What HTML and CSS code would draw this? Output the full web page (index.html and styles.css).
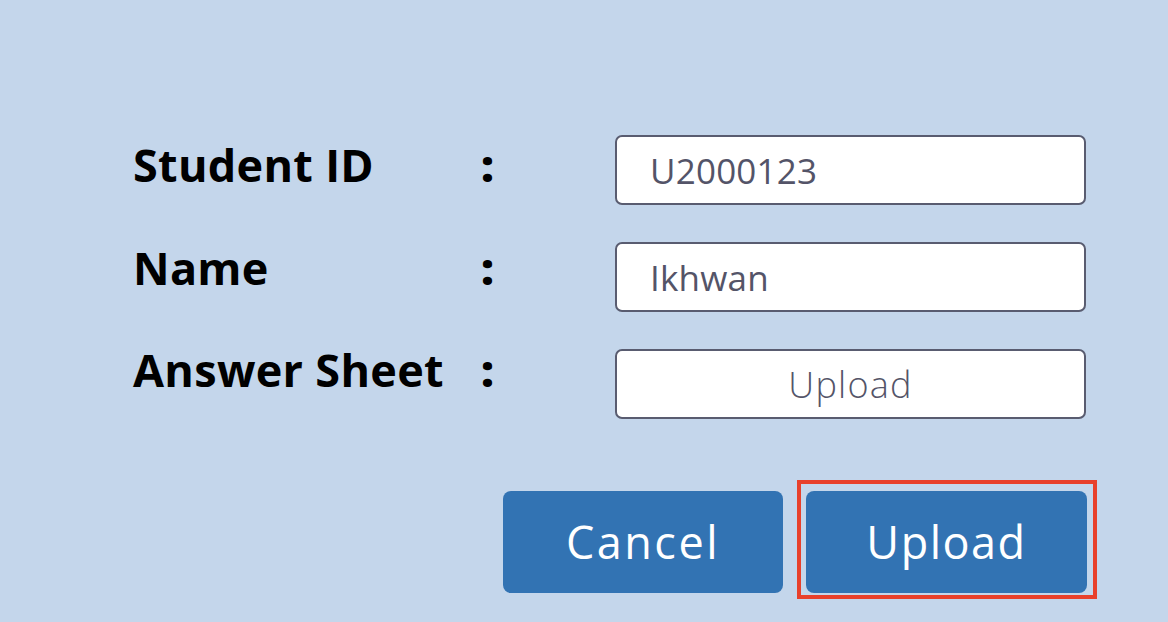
FILE: index.html
```html
<!DOCTYPE html>
<html lang="en">
<head>
<meta charset="utf-8">
<title>Upload Answer Sheet</title>
<link rel="stylesheet" href="styles.css">
</head>
<body>
<main class="page">
  <form class="form">
    <div class="fields">
      <div class="labels">
        <div class="label">Student ID</div>
        <div class="label">Name</div>
        <div class="label">Answer Sheet</div>
      </div>
      <div class="colons">
        <div class="colon">:</div>
        <div class="colon">:</div>
        <div class="colon">:</div>
      </div>
      <div class="inputs">
        <input class="field" type="text" value="U2000123" readonly>
        <input class="field" type="text" value="Ikhwan" readonly>
        <div class="field field-upload">Upload</div>
      </div>
    </div>
    <div class="actions">
      <button type="button" class="btn btn-cancel">Cancel</button>
      <div class="highlight">
        <button type="button" class="btn btn-upload">Upload</button>
      </div>
    </div>
  </form>
</main>
</body>
</html>
```
FILE: styles.css
```css
* { box-sizing: border-box; }
html, body {
  margin: 0;
  padding: 0;
  background: #c4d6eb;
  width: 1168px;
  height: 622px;
  overflow: hidden;
  font-family: "Open Sans", "Noto Sans", sans-serif;
}
.page { padding-top: 114px; }
.fields { display: flex; align-items: flex-start; }
.labels {
  width: 481px;
  padding-left: 133px;
}
.label, .colon {
  font-size: 45px;
  font-weight: 700;
  line-height: 102.5px;
  color: #000;
  white-space: nowrap;
}
.label { letter-spacing: 0.3px; }
.colon { font-weight: 800; }
.colons { width: 134px; }
.inputs {
  margin-top: 21px;
  width: 471px;
  display: flex;
  flex-direction: column;
  gap: 37px;
}
.field {
  display: block;
  width: 471px;
  height: 70px;
  border: 2px solid #595c70;
  border-radius: 7px;
  background: #fff;
  padding: 0 0 0 33px;
  margin: 0;
  font-family: "Open Sans", "Noto Sans", sans-serif;
  font-size: 35px;
  letter-spacing: 0.2px;
  color: #545468;
  outline: none;
}
.field-upload {
  display: flex;
  align-items: center;
  justify-content: center;
  padding: 0;
  font-weight: 300;
  font-size: 36px;
  letter-spacing: 1.2px;
}
.actions {
  margin-top: 58px;
  padding-left: 503px;
  display: flex;
  align-items: flex-start;
}
.btn {
  width: 281px;
  height: 102px;
  border: none;
  border-radius: 8px;
  background: #3273b3;
  color: #fff;
  font-family: "Open Sans", "Noto Sans", sans-serif;
  font-size: 45px;
  letter-spacing: 1.5px;
  padding: 0;
  margin: 0;
  display: flex;
  align-items: center;
  justify-content: center;
}
.btn-cancel {
  width: 280px;
  margin-top: 11px;
  margin-right: 14px;
  letter-spacing: 2.5px;
}
.highlight {
  border: 4px solid #e8402b;
  padding: 7px 6px 2px 5px;
}
```
